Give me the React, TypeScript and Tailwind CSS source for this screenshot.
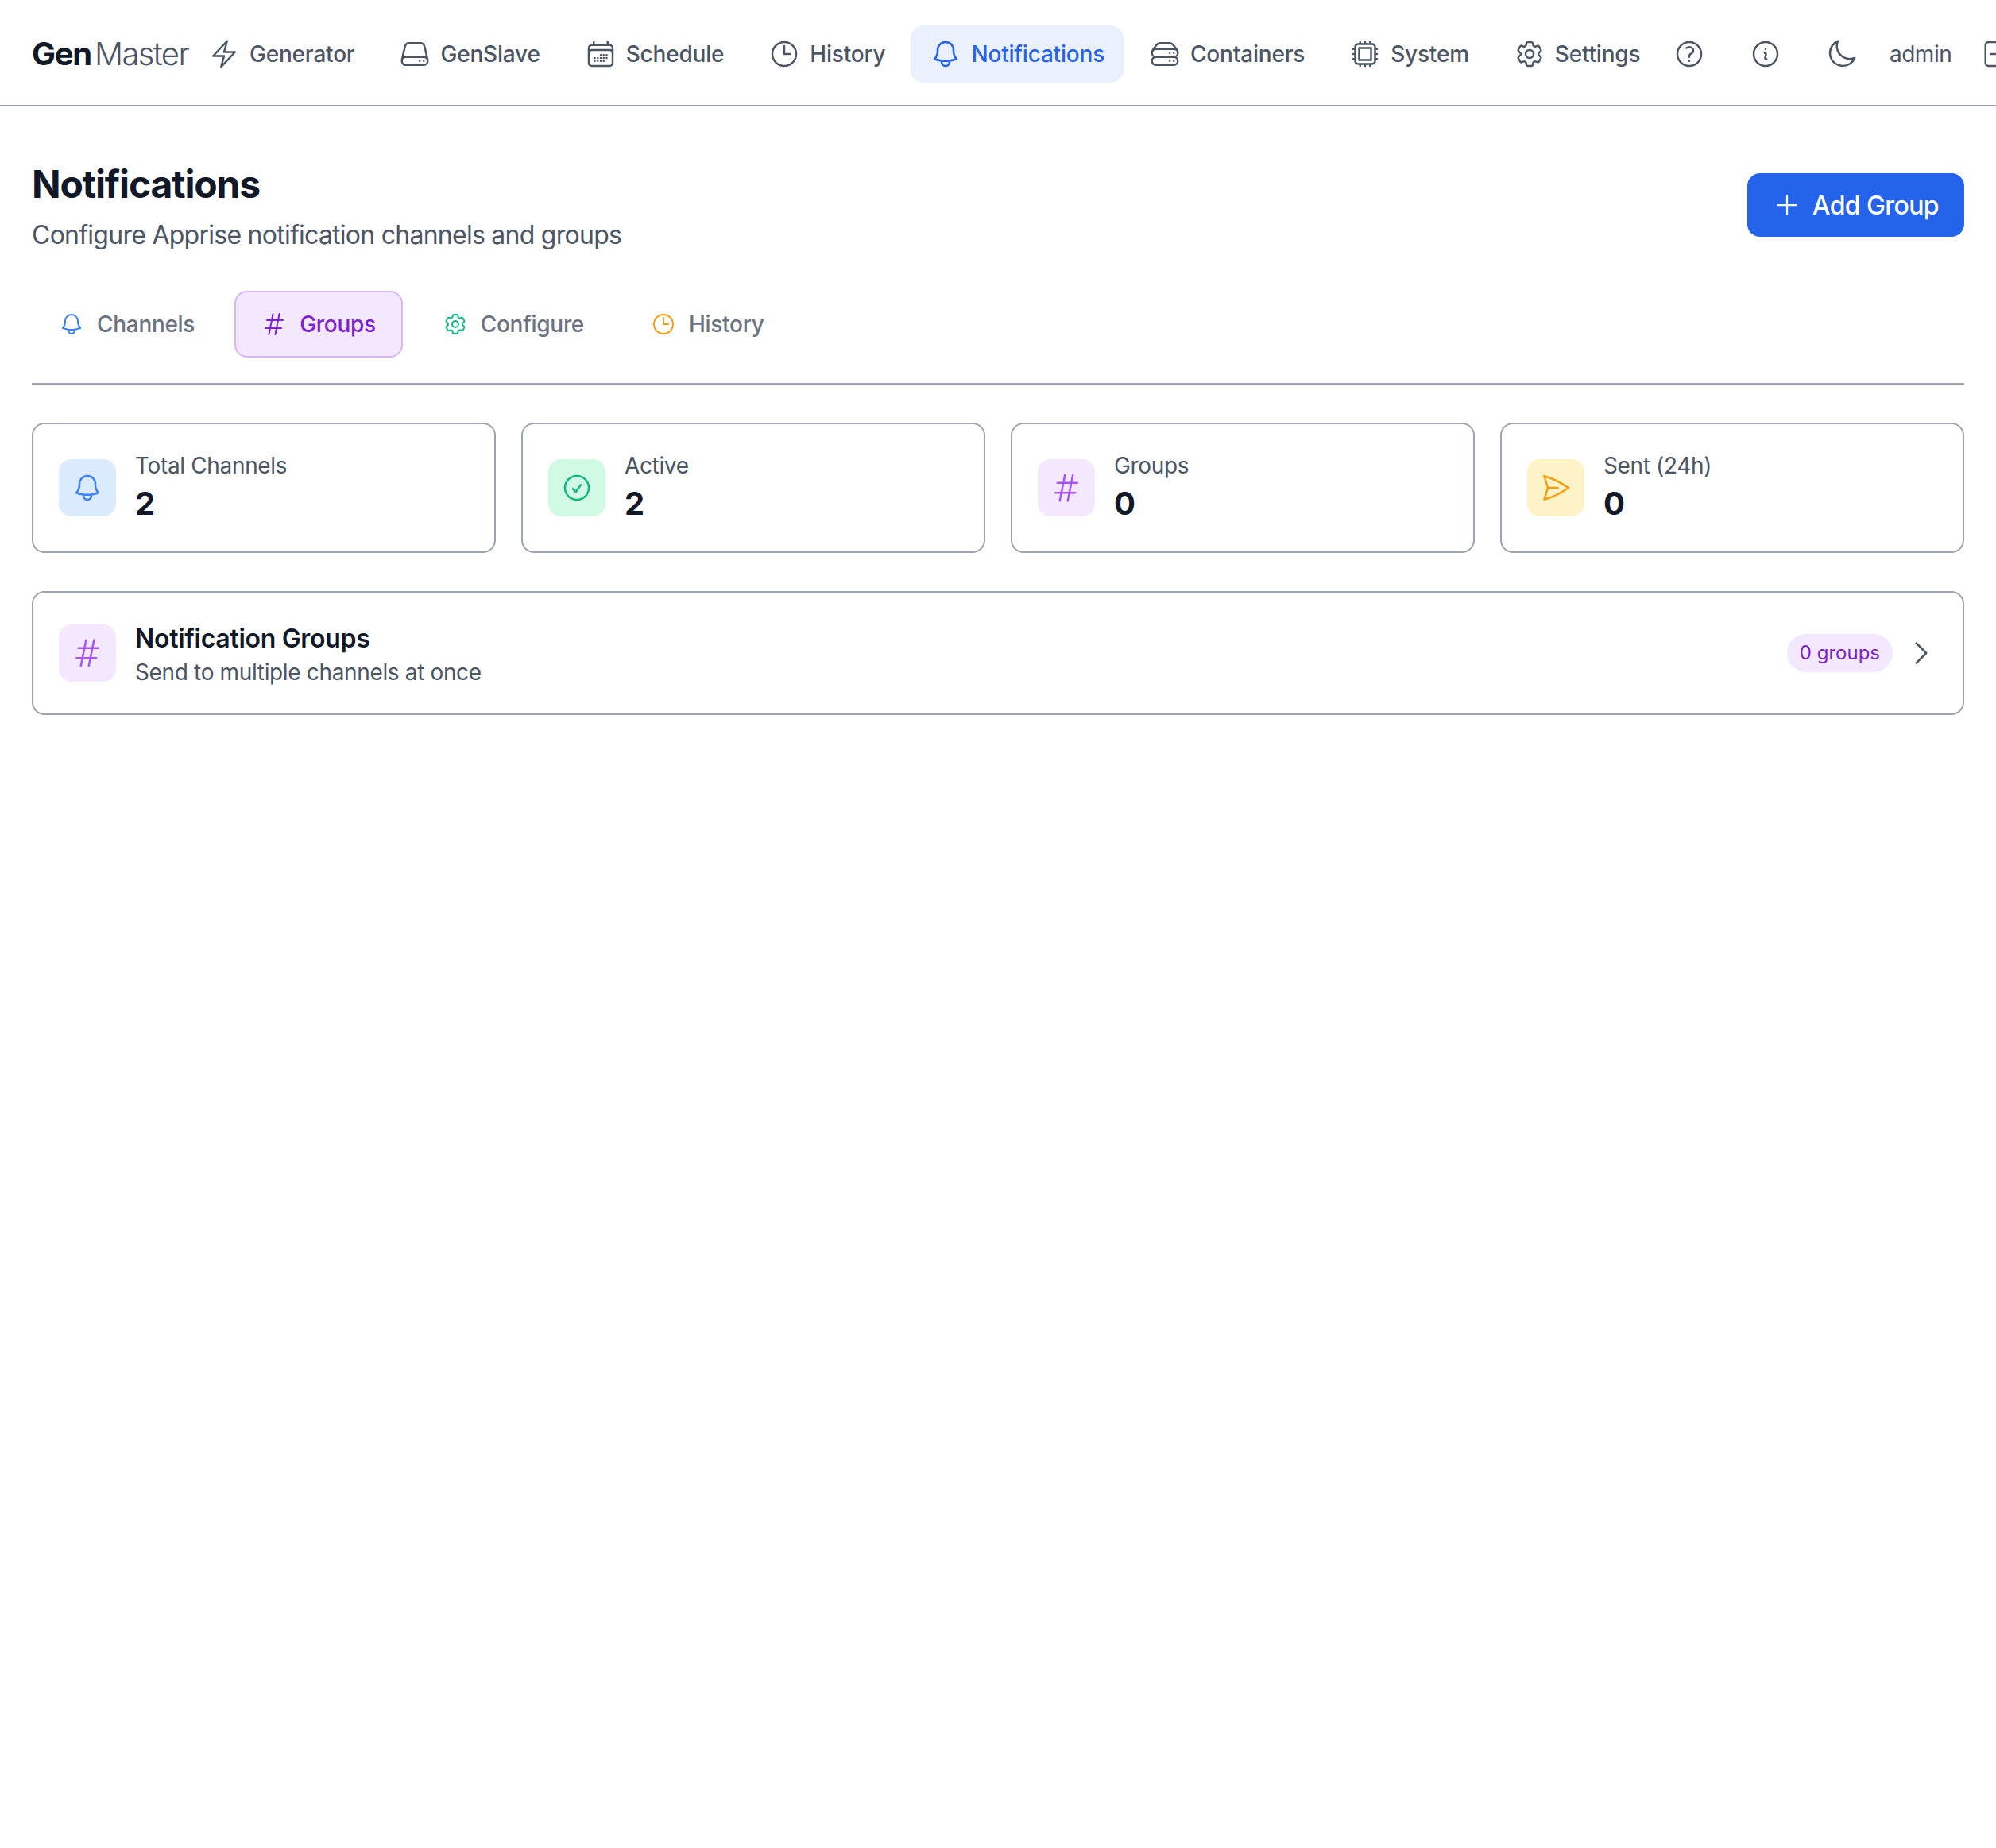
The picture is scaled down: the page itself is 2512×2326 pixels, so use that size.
import React from "react";
import {
  HiOutlineBolt,
  HiOutlineServer,
  HiOutlineCalendarDays,
  HiOutlineClock,
  HiOutlineBell,
  HiOutlineServerStack,
  HiOutlineCpuChip,
  HiOutlineCog6Tooth,
  HiOutlineQuestionMarkCircle,
  HiOutlineInformationCircle,
  HiOutlineMoon,
  HiOutlineHashtag,
  HiOutlineCheckCircle,
  HiOutlinePaperAirplane,
  HiOutlinePlus,
  HiOutlineChevronRight,
} from "react-icons/hi2";

const LogoutIcon = ({ className }: { className?: string }) => (
  <svg viewBox="0 0 24 24" fill="none" stroke="currentColor" strokeWidth={1.5} className={className}>
    <path
      strokeLinecap="round"
      strokeLinejoin="round"
      d="M15.75 9V5.25A2.25 2.25 0 0 0 13.5 3h-6a2.25 2.25 0 0 0-2.25 2.25v13.5A2.25 2.25 0 0 0 7.5 21h6a2.25 2.25 0 0 0 2.25-2.25V15m3 0 3-3m0 0-3-3m3 3H9"
    />
  </svg>
);

const navItems = [
  { label: "Generator", Icon: HiOutlineBolt },
  { label: "GenSlave", Icon: HiOutlineServer },
  { label: "Schedule", Icon: HiOutlineCalendarDays },
  { label: "History", Icon: HiOutlineClock },
  { label: "Notifications", Icon: HiOutlineBell, active: true },
  { label: "Containers", Icon: HiOutlineServerStack },
  { label: "System", Icon: HiOutlineCpuChip },
  { label: "Settings", Icon: HiOutlineCog6Tooth },
];

const tabs = [
  { label: "Channels", Icon: HiOutlineBell, iconColor: "text-[#3b82f6]" },
  { label: "Groups", Icon: HiOutlineHashtag, iconColor: "text-[#7e22ce]", active: true },
  { label: "Configure", Icon: HiOutlineCog6Tooth, iconColor: "text-[#10b981]" },
  { label: "History", Icon: HiOutlineClock, iconColor: "text-[#f59e0b]" },
];

const stats = [
  { label: "Total Channels", value: "2", Icon: HiOutlineBell, bg: "bg-[#dbeafe]", color: "text-[#3b82f6]" },
  { label: "Active", value: "2", Icon: HiOutlineCheckCircle, bg: "bg-[#d1fae5]", color: "text-[#10b981]" },
  { label: "Groups", value: "0", Icon: HiOutlineHashtag, bg: "bg-[#f3e8ff]", color: "text-[#a855f7]" },
  { label: "Sent (24h)", value: "0", Icon: HiOutlinePaperAirplane, bg: "bg-[#fef3c7]", color: "text-[#f59e0b]" },
];

export default function App() {
  return (
    <div className="min-h-[2326px] w-full overflow-hidden bg-white font-[family-name:Inter,sans-serif] text-[#111827]">
      <nav className="flex items-center border-b-2 border-[#9ca3af] pb-7 pl-10 pt-8">
        <div className="flex w-[198px] shrink-0 items-baseline gap-[4px] text-[40px] leading-[56px]">
          <span className="font-bold tracking-[-1.25px] text-[#111827]">Gen</span>
          <span className="font-light tracking-[-1.6px] text-[#4b5563]">Master</span>
        </div>
        <div className="flex w-[1850px] shrink-0 items-center gap-2">
          {navItems.map(({ label, Icon, active }) => (
            <div
              key={label}
              className={
                active
                  ? "flex items-center gap-3 rounded-2xl bg-[#eaf1fc] px-6 py-4 text-[28px] leading-[40px] font-medium tracking-[-0.2px] text-[#2563eb]"
                  : "flex items-center gap-3 rounded-2xl px-6 py-4 text-[28px] leading-[40px] font-medium tracking-[-0.2px] text-[#4b5563]"
              }
            >
              <Icon className="size-10 shrink-0" />
              <span>{label}</span>
            </div>
          ))}
        </div>
        <div className="flex shrink-0 items-center gap-5 text-[#4b5563]">
          <div className="px-[18px]">
            <HiOutlineQuestionMarkCircle className="size-10" />
          </div>
          <div className="px-[18px]">
            <HiOutlineInformationCircle className="size-10" />
          </div>
          <div className="px-[18px]">
            <HiOutlineMoon className="size-10" />
          </div>
        </div>
        <span className="ml-[22px] shrink-0 text-[28px] leading-[40px] tracking-[-0.5px] text-[#4b5563]">admin</span>
        <div className="ml-[34px] shrink-0 text-[#4b5563]">
          <LogoutIcon className="size-10" />
        </div>
      </nav>

      <main className="px-10 pt-16">
        <div className="flex items-start justify-between">
          <div>
            <h1 className="pt-1 text-[48px] leading-[60px] font-bold tracking-[-1.2px] text-[#111827]">Notifications</h1>
            <p className="mt-2 pt-1 text-[32px] leading-[44px] tracking-[-0.74px] text-[#4b5563]">
              Configure Apprise notification channels and groups
            </p>
          </div>
          <button className="mt-5 flex h-20 items-center gap-[14px] rounded-2xl bg-[#2563eb] px-8 text-[32px] leading-[46px] font-medium tracking-[-0.6px] text-white">
            <HiOutlinePlus className="size-9" />
            <span className="pt-[2px]">Add Group</span>
          </button>
        </div>

        <div className="mt-12 flex gap-4 border-b-2 border-[#9ca3af] pb-8">
          {tabs.map(({ label, Icon, iconColor, active }) => (
            <div
              key={label}
              className={
                active
                  ? "flex items-center gap-4 rounded-2xl border-2 border-[#d8b4fe] bg-[#f3e8ff] px-8 py-5 text-[28px] leading-[40px] font-medium tracking-[-0.3px] text-[#7e22ce]"
                  : "flex items-center gap-4 rounded-2xl border-2 border-transparent px-8 py-5 text-[28px] leading-[40px] font-medium tracking-[-0.3px] text-[#6b7280]"
              }
            >
              <Icon className={`size-8 ${iconColor}`} />
              <span>{label}</span>
            </div>
          ))}
        </div>

        <div className="mt-12 grid grid-cols-4 gap-8">
          {stats.map(({ label, value, Icon, bg, color }) => (
            <div key={label} className="flex items-center gap-6 rounded-2xl border-2 border-[#9ca3af] p-8">
              <div className={`flex size-[72px] items-center justify-center rounded-2xl ${bg}`}>
                <Icon className={`size-10 ${color}`} />
              </div>
              <div>
                <div className="text-[28px] leading-[40px] tracking-[-0.35px] text-[#4b5563]">{label}</div>
                <div className="text-[40px] leading-[56px] font-bold text-[#111827]">{value}</div>
              </div>
            </div>
          ))}
        </div>

        <div className="mt-12 flex items-center justify-between rounded-2xl border-2 border-[#9ca3af] p-8">
          <div className="flex items-center gap-6">
            <div className="flex size-[72px] items-center justify-center rounded-2xl bg-[#f3e8ff]">
              <HiOutlineHashtag className="size-10 text-[#a855f7]" />
            </div>
            <div>
              <div className="pt-[3px] text-[32px] leading-[45px] font-semibold tracking-[-0.3px] text-[#111827]">
                Notification Groups
              </div>
              <div className="text-[28px] leading-[40px] tracking-[-0.35px] text-[#4b5563]">
                Send to multiple channels at once
              </div>
            </div>
          </div>
          <div className="flex items-center gap-4">
            <span className="rounded-full bg-[#f3e8ff] px-4 py-2 text-[24px] leading-[32px] text-[#7e22ce]">
              0 groups
            </span>
            <HiOutlineChevronRight className="size-10 text-[#4b5563]" />
          </div>
        </div>
      </main>
    </div>
  );
}
